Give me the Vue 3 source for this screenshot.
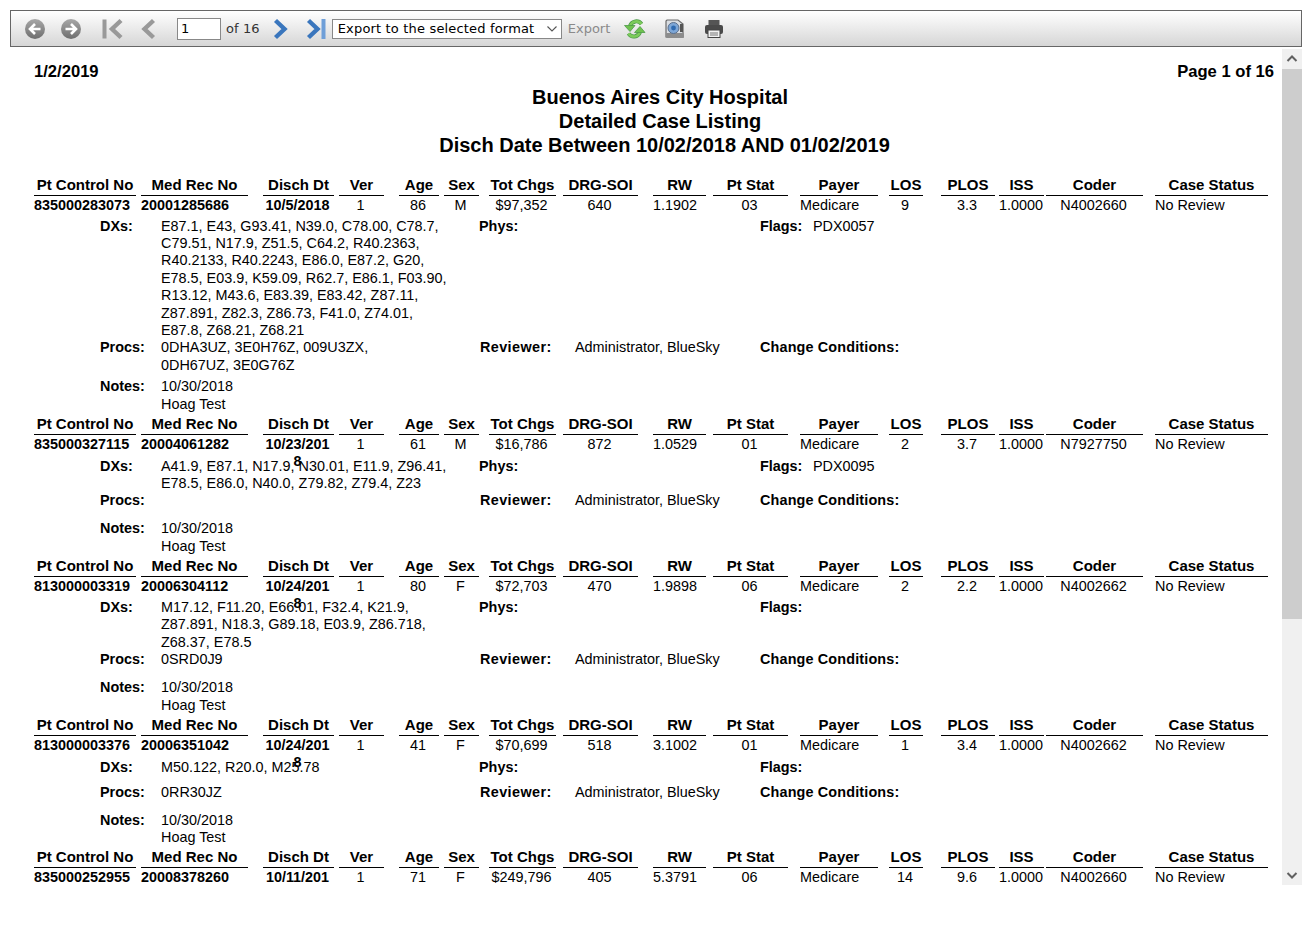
<template>
  <div class="viewer">
    <div class="toolbar">
      <svg class="icon round" width="22" height="22" viewBox="0 0 22 22">
        <defs>
          <linearGradient id="roundGrey" x1="0" y1="0" x2="0" y2="1">
            <stop offset="0" stop-color="#a8a8a8" />
            <stop offset="1" stop-color="#6e6e6e" />
          </linearGradient>
        </defs>
        <circle cx="11" cy="11" r="10" fill="url(#roundGrey)" />
        <path d="M11 6 L6 11 L11 16 M6.5 11 H16.5" fill="none" stroke="#fff" stroke-width="2.6" />
      </svg>
      <svg class="icon round next-round" width="22" height="22" viewBox="0 0 22 22">
        <circle cx="11" cy="11" r="10" fill="url(#roundGrey)" />
        <path d="M11 6 L16 11 L11 16 M5.5 11 H15.5" fill="none" stroke="#fff" stroke-width="2.6" />
      </svg>
      <svg class="icon first" width="22" height="22" viewBox="0 0 22 22">
        <path d="M2.5 1.5 V20.5" stroke="#999" stroke-width="4" />
        <path d="M19 2.5 L10 11 L19 19.5" fill="none" stroke="#999" stroke-width="4.4" />
      </svg>
      <svg class="icon prev" width="16" height="22" viewBox="0 0 16 22">
        <path d="M13.5 2.5 L4.5 11 L13.5 19.5" fill="none" stroke="#999" stroke-width="4.4" />
      </svg>
      <input class="page-input" value="1" />
      <span class="of">of 16</span>
      <svg class="icon next" width="16" height="22" viewBox="0 0 16 22">
        <path d="M2.5 2.5 L11.5 11 L2.5 19.5" fill="none" stroke="#3a76bd" stroke-width="4.4" />
      </svg>
      <svg class="icon last" width="22" height="22" viewBox="0 0 22 22">
        <path d="M2.5 2.5 L11.5 11 L2.5 19.5" fill="none" stroke="#3a76bd" stroke-width="4.4" />
        <path d="M17.5 1 V21" stroke="#6f9fd8" stroke-width="4" />
      </svg>
      <div class="format-box">
        <select class="format">
          <option>Export to the selected format</option>
        </select>
        <svg class="caret" width="12" height="8" viewBox="0 0 12 8">
          <path d="M1.5 1.5 L6 6 L10.5 1.5" fill="none" stroke="#555" stroke-width="1.1" />
        </svg>
      </div>
      <span class="export">Export</span>
      <svg class="icon refresh" width="22" height="22" viewBox="0 0 22 22">
        <path d="M17.5 6 C14.5 2 8 2.5 6 8" fill="none" stroke="#4c9a48" stroke-width="4" />
        <path d="M4.5 15.5 C7.5 20 14 19.5 16 14" fill="none" stroke="#4c9a48" stroke-width="4" />
        <path d="M17.5 6 C14.5 2 8 2.5 6 8" fill="none" stroke="#7ccb5a" stroke-width="2.6" />
        <path d="M4.5 15.5 C7.5 20 14 19.5 16 14" fill="none" stroke="#7ccb5a" stroke-width="2.6" />
        <path d="M0.5 7.5 H11 L6 13.5 Z" fill="#6fc24f" stroke="#4c9a48" stroke-width="0.8" />
        <path d="M10.5 14.5 H21 L16 8.5 Z" fill="#6fc24f" stroke="#4c9a48" stroke-width="0.8" />
      </svg>
      <svg class="icon camera" width="22" height="22" viewBox="0 0 22 22">
        <path d="M3 2 H14 L19 6 V19 H2 V3 Z" fill="#d9dde2" stroke="#6a6a6a" stroke-width="1.2" />
        <rect x="2" y="15" width="18" height="5" rx="1" fill="#8c8c8c" />
        <circle cx="9.5" cy="10" r="5.5" fill="#7da6d6" stroke="#5a6f8c" />
        <circle cx="9.5" cy="10" r="2.4" fill="#2e6ab0" />
        <rect x="16" y="6" width="3" height="8" fill="#555" />
      </svg>
      <svg class="icon printer" width="20" height="20" viewBox="0 0 20 20">
        <rect x="4.5" y="1" width="11" height="6" fill="#555" />
        <rect x="1" y="6" width="18" height="9" rx="2" fill="#4a4a4a" />
        <rect x="4" y="11" width="12" height="7.5" fill="#f2f2f2" stroke="#444" />
        <path d="M6 14 H14 M6 16 H14" stroke="#777" />
      </svg>
    </div>

    <div class="content">
      <div class="report">
        <div class="page-head">
          <span>1/2/2019</span>
          <span>Page 1 of 16</span>
        </div>
        <div class="titles">
          <div>Buenos Aires City Hospital</div>
          <div>Detailed Case Listing</div>
          <div class="range">Disch Date Between 10/02/2018 AND 01/02/2019</div>
        </div>

        <div v-for="rec in records" :key="rec.values[0]" class="record">
          <div class="row heads">
            <div
              v-for="col in columns"
              :key="col.name"
              class="head"
              :style="{ width: col.width + 'px', marginRight: col.gap + 'px' }"
            >{{ col.name }}</div>
          </div>
          <div class="row values">
            <div
              v-for="(col, i) in columns"
              :key="col.name"
              class="value"
              :class="col.align"
              :style="{ width: col.width + 'px', marginRight: col.gap + 'px' }"
            >{{ rec.values[i] }}</div>
          </div>
          <template v-if="rec.dx">
            <div class="detail dx" :style="{ paddingTop: rec.pad + 'px' }">
              <b class="label">DXs:</b>
              <div class="text">{{ rec.dx }}</div>
              <b class="label-mid phys">Phys:</b>
              <div></div>
              <b class="flags">Flags:</b>
              <div>{{ rec.flags }}</div>
            </div>
            <div class="detail procs">
              <b class="label">Procs:</b>
              <div class="text proc-text">{{ rec.procs }}</div>
              <b class="label-mid">Reviewer:</b>
              <div>Administrator, BlueSky</div>
              <b class="change">Change Conditions:</b>
            </div>
            <div class="detail notes">
              <b class="label">Notes:</b>
              <div class="text">10/30/2018<br />Hoag Test</div>
            </div>
          </template>
        </div>
      </div>

      <div class="scrollbar">
        <svg class="arrow" width="20" height="20" viewBox="0 0 20 20">
          <path d="M5.5 12 L10 7.5 L14.5 12" fill="none" stroke="#606060" stroke-width="2" />
        </svg>
        <div class="thumb"></div>
        <svg class="arrow end" width="20" height="20" viewBox="0 0 20 20">
          <path d="M5.5 8 L10 12.5 L14.5 8" fill="none" stroke="#606060" stroke-width="2" />
        </svg>
      </div>
    </div>
  </div>
</template>

<script setup>
const columns = [
  { name: 'Pt Control No', width: 102, gap: 5, align: 'left bold' },
  { name: 'Med Rec No', width: 107, gap: 15, align: 'left bold' },
  { name: 'Disch Dt', width: 71, gap: 5, align: 'bold' },
  { name: 'Ver', width: 45, gap: 15 },
  { name: 'Age', width: 40, gap: 5 },
  { name: 'Sex', width: 35, gap: 10 },
  { name: 'Tot Chgs', width: 67, gap: 7 },
  { name: 'DRG-SOI', width: 75, gap: 15 },
  { name: 'RW', width: 53, gap: 7, align: 'left' },
  { name: 'Pt Stat', width: 75, gap: 12 },
  { name: 'Payer', width: 78, gap: 11, align: 'left' },
  { name: 'LOS', width: 34, gap: 18 },
  { name: 'PLOS', width: 54, gap: 4 },
  { name: 'ISS', width: 45, gap: 2, align: 'left' },
  { name: 'Coder', width: 97, gap: 12 },
  { name: 'Case Status', width: 113, gap: 0, align: 'left' }
]

const records = [
  {
    values: ['835000283073', '20001285686', '10/5/2018', '1', '86', 'M', '$97,352', '640', '1.1902', '03', 'Medicare', '9', '3.3', '1.0000', 'N4002660', 'No Review'],
    dx: 'E87.1, E43, G93.41, N39.0, C78.00, C78.7, C79.51, N17.9, Z51.5, C64.2, R40.2363, R40.2133, R40.2243, E86.0, E87.2, G20, E78.5, E03.9, K59.09, R62.7, E86.1, F03.90, R13.12, M43.6, E83.39, E83.42, Z87.11, Z87.891, Z82.3, Z86.73, F41.0, Z74.01, E87.8, Z68.21, Z68.21',
    flags: 'PDX0057',
    procs: '0DHA3UZ, 3E0H76Z, 009U3ZX, 0DH67UZ, 3E0G76Z',
    pad: 1.5
  },
  {
    values: ['835000327115', '20004061282', '10/23/2018', '1', '61', 'M', '$16,786', '872', '1.0529', '01', 'Medicare', '2', '3.7', '1.0000', 'N7927750', 'No Review'],
    dx: 'A41.9, E87.1, N17.9, N30.01, E11.9, Z96.41, E78.5, E86.0, N40.0, Z79.82, Z79.4, Z23',
    flags: 'PDX0095',
    procs: '',
    pad: 3
  },
  {
    values: ['813000003319', '20006304112', '10/24/2018', '1', '80', 'F', '$72,703', '470', '1.9898', '06', 'Medicare', '2', '2.2', '1.0000', 'N4002662', 'No Review'],
    dx: 'M17.12, F11.20, E66.01, F32.4, K21.9, Z87.891, N18.3, G89.18, E03.9, Z86.718, Z68.37, E78.5',
    flags: '',
    procs: '0SRD0J9',
    pad: 2
  },
  {
    values: ['813000003376', '20006351042', '10/24/2018', '1', '41', 'F', '$70,699', '518', '3.1002', '01', 'Medicare', '1', '3.4', '1.0000', 'N4002662', 'No Review'],
    dx: 'M50.122, R20.0, M25.78',
    flags: '',
    procs: '0RR30JZ',
    pad: 3
  },
  {
    values: ['835000252955', '20008378260', '10/11/2018', '1', '71', 'F', '$249,796', '405', '5.3791', '06', 'Medicare', '14', '9.6', '1.0000', 'N4002660', 'No Review'],
    dx: '',
    flags: '',
    procs: '',
    pad: 0
  }
]
</script>

<style>
html,
body {
  margin: 0;
  background: #fff;
}
</style>

<style scoped>
.viewer {
  width: 1312px;
  height: 937px;
  padding: 10px 10px 0;
  box-sizing: border-box;
  font-family: "Liberation Sans", Arial, sans-serif;
  color: #000;
  overflow: hidden;
}

.toolbar {
  display: flex;
  align-items: center;
  height: 37px;
  box-sizing: border-box;
  border: 1px solid #666;
  background: linear-gradient(#fff, #d6d6d6);
  font-family: "DejaVu Sans", Verdana, sans-serif;
  font-size: 13px;
}

.icon {
  flex: none;
}

.round {
  margin-left: 13px;
}

.next-round {
  margin-left: 14px;
}

.first {
  margin-left: 20px;
}

.prev {
  margin-left: 16px;
}

.page-input {
  width: 44px;
  height: 22px;
  box-sizing: border-box;
  margin-left: 21px;
  padding: 0 3px;
  border: 1px solid #888;
  background: #fff;
  font: 13px "DejaVu Sans", Verdana, sans-serif;
}

.of {
  margin-left: 5px;
  color: #333;
  letter-spacing: 0.1px;
}

.next {
  margin-left: 13px;
}

.last {
  margin-left: 17px;
}

.format-box {
  position: relative;
  flex: none;
  width: 230px;
  height: 20px;
  margin-left: 4px;
}

.format {
  display: block;
  width: 100%;
  height: 100%;
  box-sizing: border-box;
  padding: 0 0 0 5px;
  border: 1px solid #888;
  border-radius: 0;
  appearance: none;
  background: #fff;
  font: 13px "DejaVu Sans", Verdana, sans-serif;
  letter-spacing: 0.17px;
  color: #000;
}

.caret {
  position: absolute;
  top: 6px;
  right: 4px;
}

.export {
  margin-left: 6px;
  color: #8a8a8a;
}

.refresh {
  margin-left: 14px;
}

.camera {
  margin-left: 18px;
}

.printer {
  margin-left: 18px;
}

.content {
  display: flex;
  height: 836px;
  margin-top: 2px;
}

.report {
  flex: 1;
  min-width: 0;
  padding: 12px 8px 0 24px;
  overflow: hidden;
  box-sizing: border-box;
}

.page-head {
  display: flex;
  justify-content: space-between;
  height: 22px;
  line-height: 22px;
  font-size: 16.6px;
  font-weight: bold;
}

.titles {
  margin-top: 2px;
  margin-bottom: 18px;
  padding-left: 12px;
  text-align: center;
  font-size: 20px;
  font-weight: bold;
  line-height: 24px;
}

.range {
  padding-left: 9px;
}

.row {
  display: flex;
}

.heads {
  height: 21px;
}

.head {
  height: 20px;
  line-height: 20px;
  border-bottom: 1px solid #000;
  font-size: 15px;
  font-weight: bold;
  text-align: center;
  white-space: nowrap;
}

.values {
  height: 20px;
}

.value {
  box-sizing: border-box;
  padding-top: 1px;
  padding-right: 2px;
  line-height: 17px;
  font-size: 14.4px;
  text-align: center;
  word-break: break-all;
}

.value.left {
  padding-right: 0;
  text-align: left;
}

.value.bold {
  font-weight: bold;
}

.detail {
  display: grid;
  grid-template-columns: 127px 319px 95px 185px 53px 1fr;
  font-size: 14.4px;
  line-height: 17.4px;
}

.label {
  padding-left: 66px;
}

.text {
  width: 292px;
}

.proc-text {
  width: 262px;
}

.label-mid {
  letter-spacing: 0.4px;
}

.phys {
  margin-left: -1px;
  letter-spacing: 0;
}

.flags,
.change {
  white-space: nowrap;
}

.change {
  letter-spacing: 0.15px;
}

.dx {
  min-height: 25px;
}

.procs {
  min-height: 28px;
  padding-bottom: 4px;
  box-sizing: border-box;
}

.notes {
  margin-bottom: 0.7px;
}

.scrollbar {
  flex: none;
  display: flex;
  flex-direction: column;
  width: 20px;
  background: #f0f0f0;
}

.arrow {
  display: block;
  flex: none;
}

.thumb {
  height: 550px;
  background: #cdcdcd;
}

.arrow.end {
  margin-top: auto;
}
</style>
